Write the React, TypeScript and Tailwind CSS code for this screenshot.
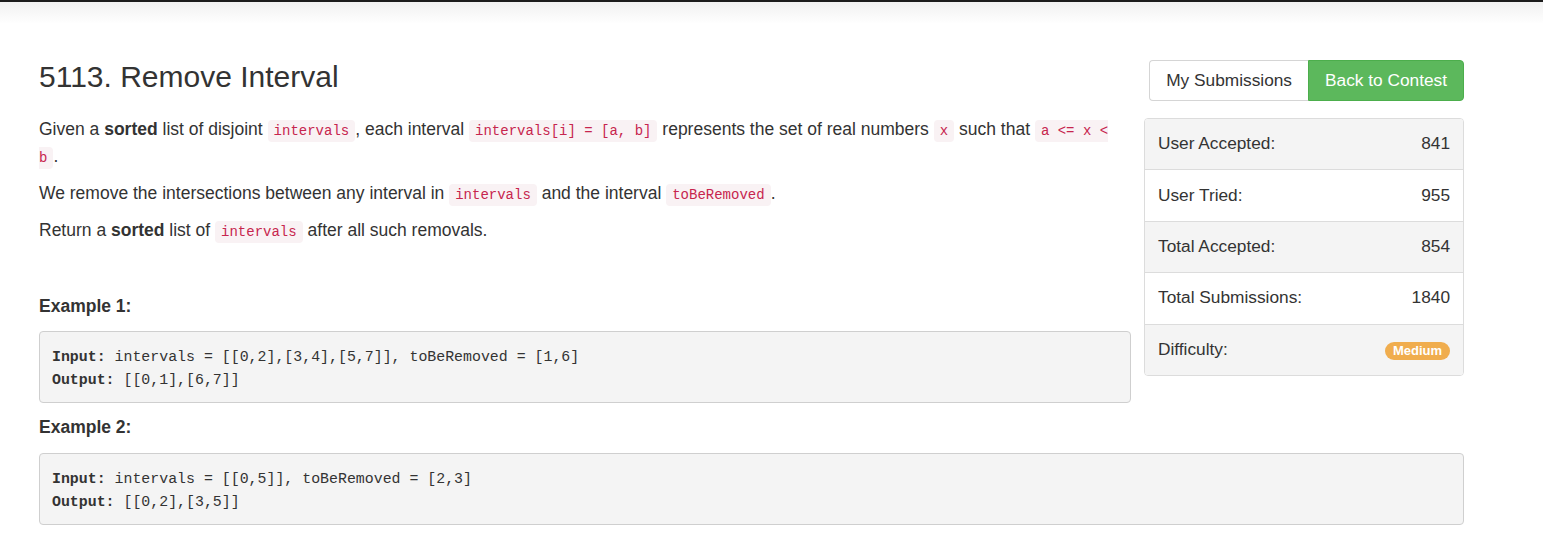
const sans = { fontFamily: '"Liberation Sans", Arial, Helvetica, sans-serif' };

function Code({ children }: { children: React.ReactNode }) {
    return (
        <code className="font-['Liberation_Mono',monospace] text-[14px] text-[#c7254e] bg-[#f9f2f4] px-[6px] py-[3px] rounded-[4px]">
            {children}
        </code>
    );
}

const stats: { label: string; value: React.ReactNode }[] = [
    { label: "User Accepted:", value: "841" },
    { label: "User Tried:", value: "955" },
    { label: "Total Accepted:", value: "854" },
    { label: "Total Submissions:", value: "1840" },
    {
        label: "Difficulty:",
        value: (
            <span className="inline-block bg-[#f0ad4e] text-white font-bold text-[13px] leading-[18px] px-[8px] rounded-full">
                Medium
            </span>
        ),
    },
];

function Sidebar() {
    return (
        <div className="float-right w-[320px] ml-[13px] text-[17.3px]">
            {/* button group */}
            <div className="flex justify-end">
                <button className="h-[41px] px-[16px] border border-[#d5d5d5] border-r-0 rounded-l-[4px] bg-white text-[#333]">
                    My Submissions
                </button>
                <button className="h-[41px] px-[16px] border border-[#4cae4c] rounded-r-[4px] bg-[#5cb85c] text-white">
                    Back to Contest
                </button>
            </div>

            {/* stats panel */}
            <div className="mt-[17px] border border-[#dcdcdc] rounded-[4px] overflow-hidden">
                {stats.map((s, i) => (
                    <div
                        key={s.label}
                        className={
                            "px-[13px] flex items-center justify-between " +
                            (i > 0 ? "h-[51.4px] border-t border-[#dcdcdc] " : "h-[50.4px] ") +
                            (i % 2 === 0 ? "bg-[#f4f4f4]" : "bg-white")
                        }
                    >
                        <span>{s.label}</span>
                        <span>{s.value}</span>
                    </div>
                ))}
            </div>
        </div>
    );
}

function Example({ input, output }: { input: string; output: string }) {
    return (
        <pre className="overflow-auto font-['Liberation_Mono',monospace] text-[14.9px] leading-[23px] text-[#333] bg-[#f4f4f4] border border-[#cfcfcf] rounded-[4px] px-[12px] pt-[14px] pb-[10px] mb-[12px]">
            <strong>Input:</strong> {input}
            {"\n"}
            <strong>Output:</strong> {output}
        </pre>
    );
}

export default function App() {
    return (
        <div className="min-h-[556px] bg-white text-[#333] text-[17.5px]" style={sans}>
            {/* top navbar edge */}
            <div className="h-[2px] bg-[#1c1c1c]" />
            <div className="bg-[linear-gradient(to_bottom,#f1f1f1,#ffffff_22px)] pt-[57px]">
                <div className="ml-[39px] w-[1425px] pb-[30px]">
                    <Sidebar />

                    <h3 className="text-[30px] leading-[33px] mt-[1px] text-[#333]">5113. Remove Interval</h3>

                    <div className="mt-[24px] leading-[25px]">
                        <p className="mb-[10px]">
                            Given a <strong>sorted</strong> list of disjoint <Code>intervals</Code>, each interval{" "}
                            <Code>intervals[i] = [a, b]</Code> represents the set of real numbers <Code>x</Code> such
                            that <Code>a &lt;= x &lt; b</Code>.
                        </p>
                        <p className="mb-[10px]">
                            We remove the intersections between any interval in <Code>intervals</Code> and the interval{" "}
                            <Code>toBeRemoved</Code>.
                        </p>
                        <p className="mb-[10px]">
                            Return a <strong>sorted</strong> list of <Code>intervals</Code> after all such removals.
                        </p>

                        <p className="mt-[49px] mb-[11.5px]">
                            <strong>Example 1:</strong>
                        </p>
                        <Example
                            input="intervals = [[0,2],[3,4],[5,7]], toBeRemoved = [1,6]"
                            output="[[0,1],[6,7]]"
                        />

                        <p className="mb-[13.5px]">
                            <strong>Example 2:</strong>
                        </p>
                        <Example input="intervals = [[0,5]], toBeRemoved = [2,3]" output="[[0,2],[3,5]]" />
                    </div>
                </div>
            </div>
        </div>
    );
}
